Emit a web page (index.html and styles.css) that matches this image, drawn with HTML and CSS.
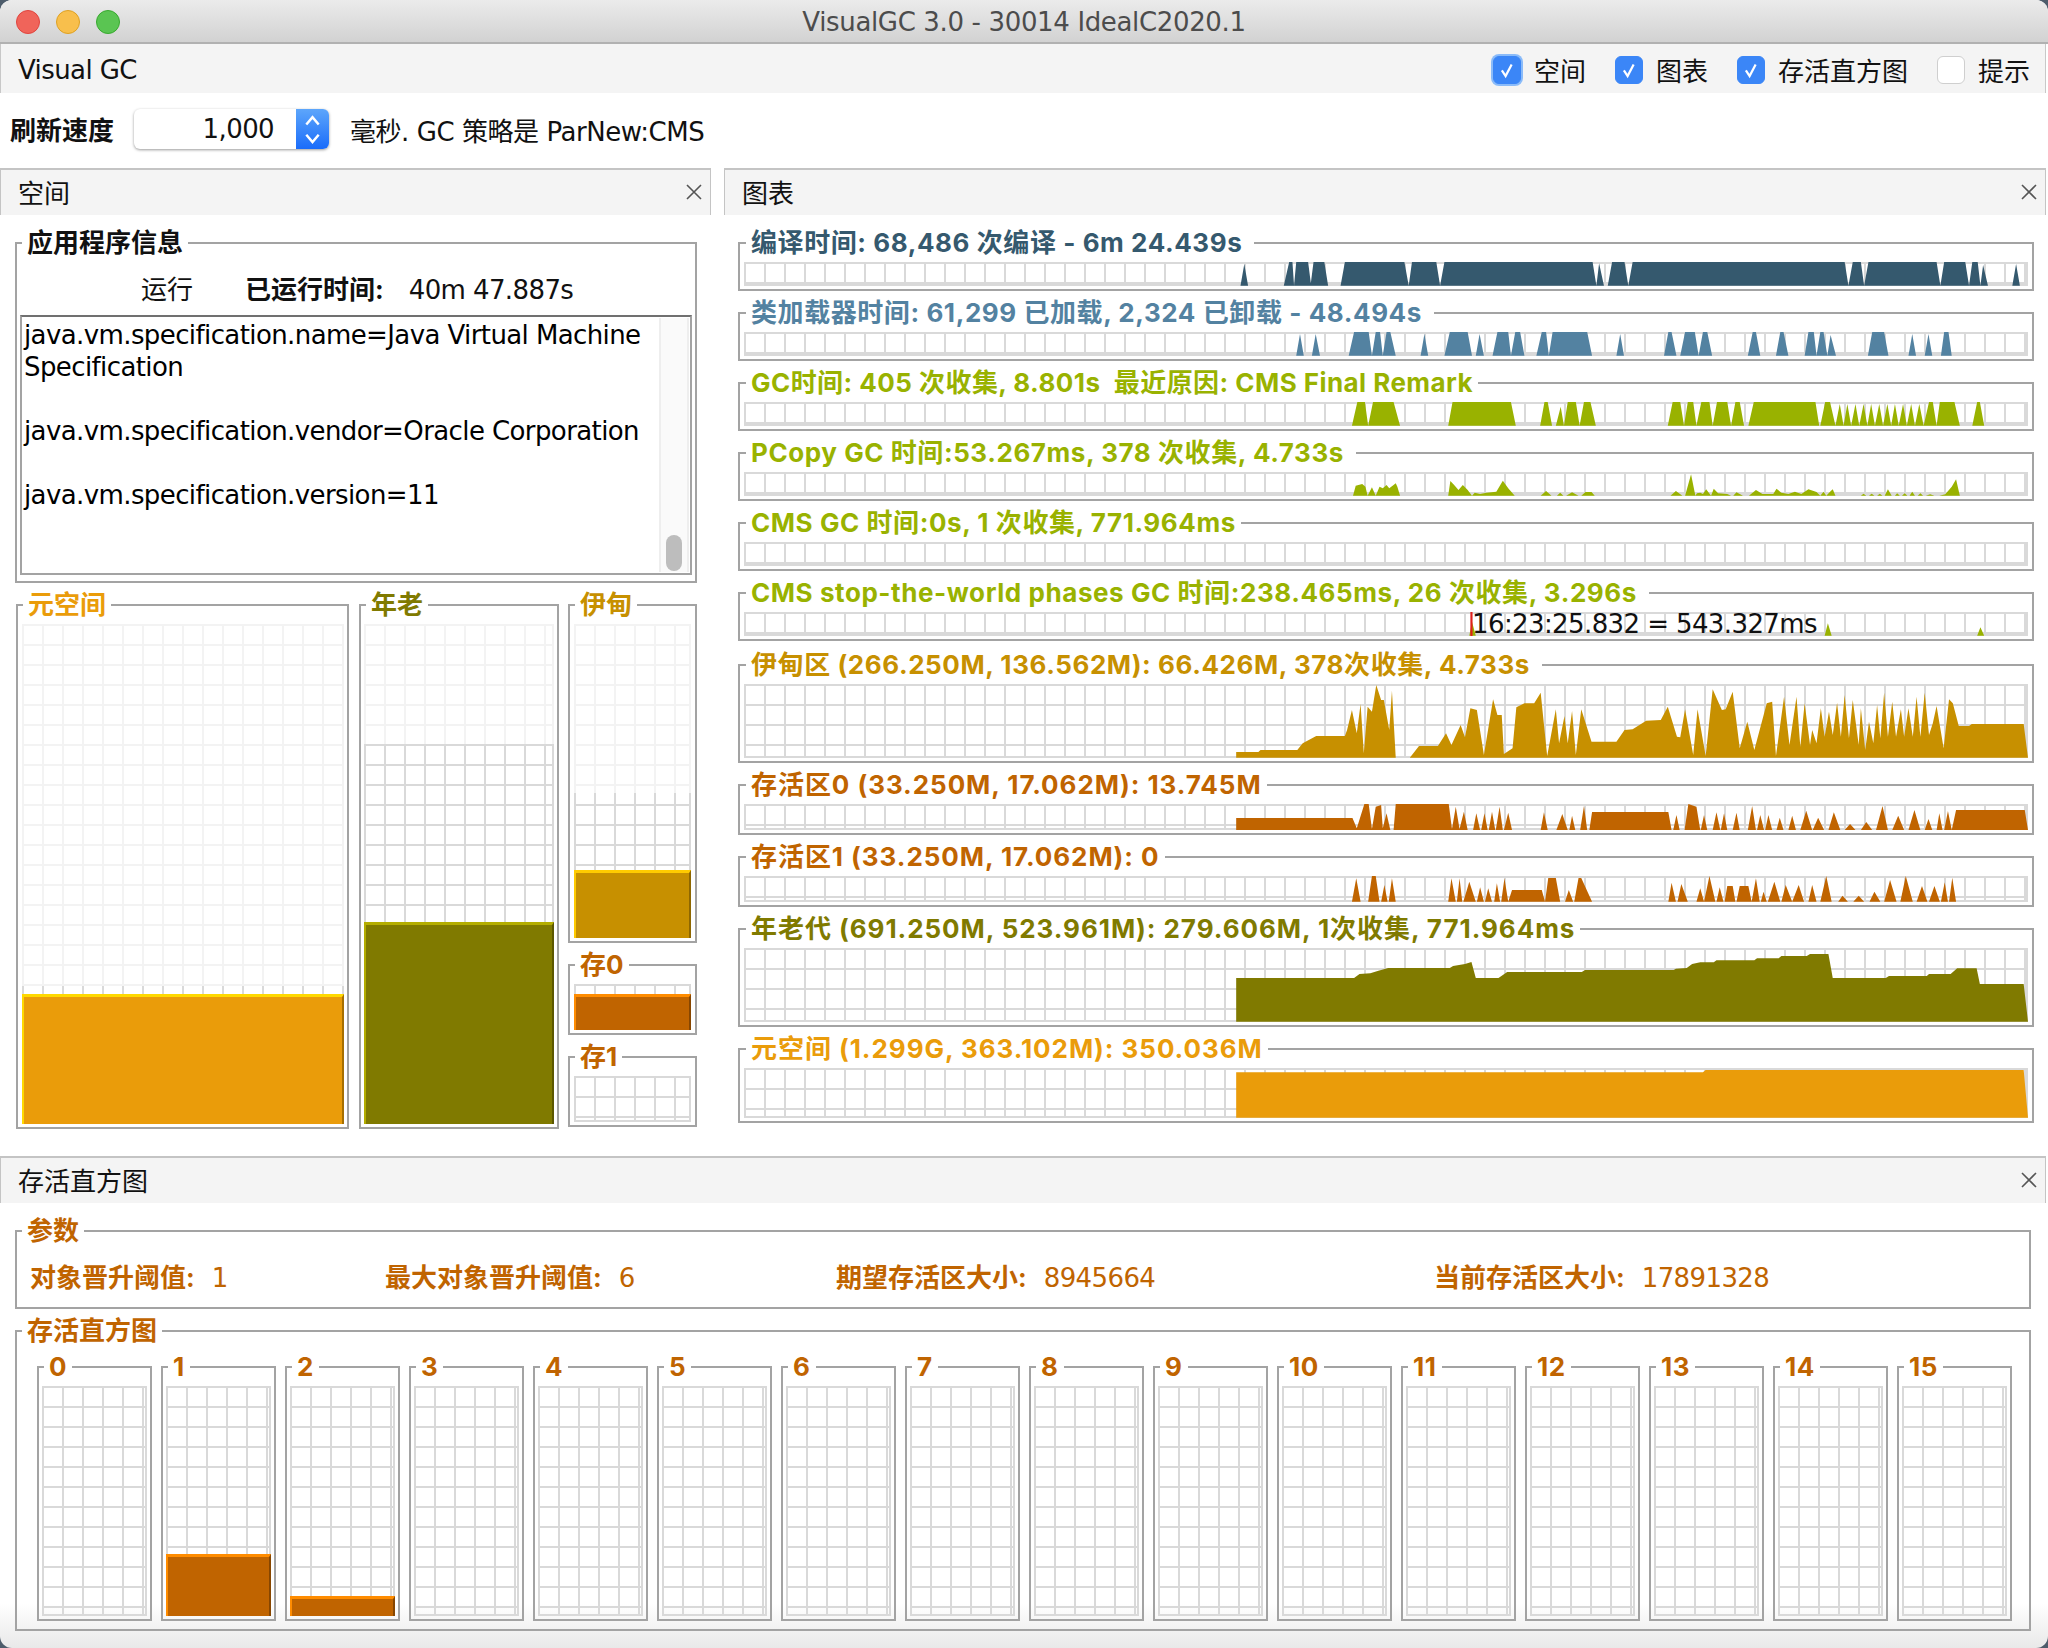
FILE: index.html
```html
<!DOCTYPE html>
<html lang="zh-CN">
<head>
    <meta charset="UTF-8">
    <title>VisualGC 3.0 - 30014 IdealC2020.1</title>
    <link rel="stylesheet" href="styles.css">
</head>
<body>
<div class="window">
    <div class="titlebar">
        <div class="lights"><span class="light red"></span><span class="light yellow"></span><span class="light green"></span></div>
        <div class="title">VisualGC 3.0 - 30014 IdealC2020.1</div>
    </div>

    <div class="toolbar">
        <span class="latin">Visual GC</span>
        <div class="toggles">
            <label class="toggle"><span class="check on focus"><svg viewBox="0 0 28 28"><path d="M8.5 14.5 12.5 20.5 19 8"/></svg></span>空间</label>
            <label class="toggle"><span class="check on"><svg viewBox="0 0 28 28"><path d="M8.5 14.5 12.5 20.5 19 8"/></svg></span>图表</label>
            <label class="toggle"><span class="check on"><svg viewBox="0 0 28 28"><path d="M8.5 14.5 12.5 20.5 19 8"/></svg></span>存活直方图</label>
            <label class="toggle"><span class="check"></span>提示</label>
        </div>
    </div>

    <div class="refresh">
        <b>刷新速度</b>
        <div class="spinner">
            <span class="spinner-value latin">1,000</span>
            <span class="spinner-arrows"><svg viewBox="0 0 32 40"><path d="M10 15 16 8 22 15M10 25 16 32 22 25"/></svg></span>
        </div>
        <span class="strategy">毫秒. GC 策略是 ParNew:CMS</span>
    </div>

    <div class="panels">
        <section class="panel">
            <div class="panel-head">空间<svg class="close" viewBox="0 0 16 16"><path d="M1 1 15 15M15 1 1 15"/></svg></div>
            <div class="space-body">
                <fieldset class="box app-info">
                    <legend>应用程序信息</legend>
                    <div class="run-row"><span class="run-state">运行</span><b>已运行时间:</b><span class="run-time latin">40m 47.887s</span></div>
                    <div class="props">
                        <div class="props-text latin">java.vm.specification.name=Java Virtual Machine
Specification

java.vm.specification.vendor=Oracle Corporation

java.vm.specification.version=11</div>
                        <div class="scrollbar"><span class="thumb"></span></div>
                    </div>
                </fieldset>

                <div class="gauges">
                    <fieldset class="box c-meta">
                        <legend>元空间</legend>
                        <div class="plot gauge" style="height:500px"><div class="reserved" style="height:362px"></div><div class="used" style="height:130px"></div></div>
                    </fieldset>
                    <fieldset class="box c-old">
                        <legend>年老</legend>
                        <div class="plot gauge" style="height:500px"><div class="reserved" style="height:120px"></div><div class="used" style="height:202px"></div></div>
                    </fieldset>
                    <div class="gauge-stack">
                        <fieldset class="box c-eden">
                            <legend>伊甸</legend>
                            <div class="plot gauge" style="height:314px"><div class="reserved" style="height:169px"></div><div class="used" style="height:68px"></div></div>
                        </fieldset>
                        <fieldset class="box c-surv">
                            <legend>存0</legend>
                            <div class="plot gauge" style="height:46px"><div class="used" style="height:36px"></div></div>
                        </fieldset>
                        <fieldset class="box c-surv">
                            <legend>存1</legend>
                            <div class="plot gauge" style="height:46px"></div>
                        </fieldset>
                    </div>
                </div>
            </div>
        </section>

        <section class="panel">
            <div class="panel-head">图表<svg class="close" viewBox="0 0 16 16"><path d="M1 1 15 15M15 1 1 15"/></svg></div>
            <div class="charts">
                <fieldset class="box chart c-compile">
                    <legend class="long">编译时间: 68,486 次编译 - 6m 24.439s</legend>
                    <div class="plot h24"><svg viewBox="-843 126 2374 72" preserveAspectRatio="none"><path d="M75 197 82 132 89 197ZM155 197 165 126 171 126 174 197 178 126 200 126 205 190 210 126 230 126 237 197ZM260 197 268 126 378 126 386 197 392 126 437 126 444 197 452 126 726 126 733 197 738 130 747 197ZM754 197 762 126 785 126 792 197 800 126 1192 126 1199 197 1207 126 1222 126 1228 197 1236 126 1362 126 1369 197 1376 126 1415 126 1422 197 1428 126 1438 126 1443 197 1448 135 1457 197ZM1502 197 1509 132 1516 197Z"/></svg></div>
                </fieldset>
                <fieldset class="box chart c-loader">
                    <legend class="long">类加载器时间: 61,299 已加载, 2,324 已卸载 - 48.494s</legend>
                    <div class="plot h24"><svg viewBox="-843 336 2374 72" preserveAspectRatio="none"><path d="M178 407 185 342 192 407ZM207 407 214 342 222 407ZM275 407 285 336 312 336 318 407 325 336 333 336 338 407 345 336 352 336 362 407ZM408 407 415 342 422 407ZM452 407 462 336 495 336 503 407ZM510 407 517 342 525 407ZM541 407 550 336 570 336 575 407 583 336 592 336 600 407ZM622 407 632 336 640 336 645 407 652 336 716 336 725 407ZM770 407 777 342 784 407ZM858 407 866 336 872 336 881 407ZM888 407 897 336 915 336 922 407 930 336 938 336 947 407ZM1013 407 1022 336 1028 336 1036 407ZM1065 407 1073 336 1079 336 1088 407ZM1118 407 1125 336 1135 336 1140 407 1147 336 1153 336 1160 407 1166 345 1176 407ZM1235 407 1243 336 1265 336 1273 407ZM1310 407 1317 342 1324 407ZM1340 407 1347 342 1354 407ZM1370 407 1376 336 1384 336 1390 407Z"/></svg></div>
                </fieldset>
                <fieldset class="box chart c-gc">
                    <legend class="tight">GC时间: 405 次收集, 8.801s &nbsp;最近原因: CMS Final Remark</legend>
                    <div class="plot h24"><svg viewBox="-843 546 2374 72" preserveAspectRatio="none"><path d="M281 617 291 546 305 546 311 617 320 546 358 546 370 617ZM459 617 467 546 575 546 584 617ZM629 617 637 546 643 546 651 617ZM658 617 667 560 673 617 680 546 695 546 702 617 710 546 722 546 732 617ZM865 617 874 546 888 546 895 617 902 546 912 546 918 617 927 546 942 546 948 617 956 546 975 546 982 617 990 546 998 546 1006 617ZM1014 617 1024 546 1138 546 1145 617 1147 617 1156 546 1165 546 1175 617 1183 552 1190 617 1197 552 1204 617 1212 552 1219 617 1227 552 1234 617 1241 552 1248 617 1256 552 1263 617 1271 552 1278 617 1285 552 1292 617 1300 552 1307 617 1315 552 1322 617 1330 552 1338 617 1348 546 1355 546 1362 617 1368 546 1395 546 1405 617ZM1428 617 1437 546 1442 546 1450 617Z"/></svg></div>
                </fieldset>
                <fieldset class="box chart c-gc">
                    <legend class="long">PCopy GC 时间:53.267ms, 378 次收集, 4.733s</legend>
                    <div class="plot h24"><svg viewBox="-843 756 2374 72" preserveAspectRatio="none"><path d="M283 827 288 797 300 792 306 800 310 827 318 802 325 827 332 800 338 805 345 795 350 805 358 795 362 790 365 800 370 827ZM459 827 463 783 470 795 478 810 486 795 495 810 503 827 508 818 518 822 530 818 548 815 560 782 570 805 582 827ZM630 827 640 813 650 827ZM660 827 666 818 672 827ZM677 827 688 817 700 827ZM705 827 713 816 724 816 730 827ZM870 827 880 813 892 827ZM897 827 908 763 916 827 919 820 925 818 930 822 936 808 945 827 950 806 958 820 975 822 982 827 986 827 992 817 1004 827ZM1015 827 1028 810 1040 822 1060 822 1066 806 1075 818 1088 822 1100 815 1112 822 1125 808 1140 816 1147 827 1153 815 1158 827 1165 815 1170 808 1175 827ZM1222 827 1227 821 1232 827ZM1237 827 1242 821 1247 827ZM1252 827 1257 821 1262 827ZM1266 827 1272 808 1279 827ZM1285 827 1289 820 1294 827ZM1298 827 1303 820 1308 827ZM1312 827 1317 815 1322 827ZM1327 827 1332 820 1337 827ZM1342 827 1350 823 1358 827ZM1367 827 1378 823 1390 800 1398 778 1405 827Z"/></svg></div>
                </fieldset>
                <fieldset class="box chart c-gc">
                    <legend>CMS GC 时间:0s, 1 次收集, 771.964ms</legend>
                    <div class="plot h24"></div>
                </fieldset>
                <fieldset class="box chart c-gc">
                    <legend class="long">CMS stop-the-world phases GC 时间:238.465ms, 26 次收集, 3.296s</legend>
                    <div class="plot h24 has-tip">
                        <svg viewBox="-843 1176 2374 72" preserveAspectRatio="none"><path d="M498 1247 503 1205 510 1247ZM1155 1247 1161 1210 1168 1247ZM1437 1247 1443 1222 1450 1247Z"/><rect class="marker" x="500" y="1176" width="4" height="72"/></svg>
                        <span class="tip latin">16:23:25.832 = 543.327ms</span>
                    </div>
                </fieldset>
                <fieldset class="box chart chart-wide-gap c-eden">
                    <legend class="long">伊甸区 (266.250M, 136.562M): 66.426M, 378次收集, 4.733s</legend>
                    <div class="plot h74"><svg viewBox="-843 102 2374 222" preserveAspectRatio="none"><path d="M67 323 67 306 108 306 112 300 180 300 190 280 215 258 268 258 272 240 281 180 290 250 297 162 303 310 310 170 318 185 326 105 335 150 340 150 350 240 355 122 362 323ZM388 323 405 288 440 288 455 250 465 285 482 225 490 262 500 175 512 180 525 315 542 148 550 195 558 195 562 312 578 295 585 172 600 160 618 160 630 128 642 318 658 178 664 280 674 198 680 280 688 183 695 315 705 178 724 275 770 275 785 240 800 238 825 212 852 210 865 170 882 260 888 262 897 178 912 315 920 178 935 318 948 118 965 180 972 178 985 125 998 295 1012 215 1025 300 1048 160 1058 155 1065 318 1080 140 1090 285 1103 140 1110 290 1118 160 1128 285 1132 240 1140 280 1148 175 1155 260 1163 185 1170 255 1178 158 1185 260 1192 135 1200 265 1207 150 1218 285 1222 175 1230 300 1237 215 1245 280 1252 165 1258 265 1265 128 1272 260 1280 155 1287 260 1296 178 1302 260 1310 175 1318 260 1325 140 1332 260 1340 128 1348 255 1355 220 1362 168 1375 295 1385 148 1392 160 1403 228 1422 228 1427 222 1523 222 1531 323Z"/></svg></div>
                </fieldset>
                <fieldset class="box chart c-surv">
                    <legend class="mem">存活区0 (33.250M, 17.062M): 13.745M</legend>
                    <div class="plot h26"><svg viewBox="-843 462 2374 78" preserveAspectRatio="none"><path d="M67 540 67 504 282 504 290 535 304 462 312 462 318 537 325 470 335 465 338 535 345 490 352 540 358 540 362 462 460 462 466 537 473 470 480 537 488 485 495 540ZM505 540 511 490 518 540ZM520 540 526 490 532 540ZM534 540 540 485 546 540ZM547 540 554 470 560 540ZM562 540 570 488 577 540ZM630 540 636 487 643 540ZM659 540 670 492 680 540ZM683 540 688 497 694 540ZM703 540 710 468 716 540ZM720 540 725 486 866 486 872 540ZM875 540 881 495 887 540ZM896 540 903 462 918 470 925 540ZM926 540 932 495 938 540ZM948 540 955 487 962 540ZM963 540 969 490 975 540ZM985 540 992 488 998 540ZM1013 540 1021 468 1028 540ZM1030 540 1036 495 1043 540ZM1045 540 1051 495 1058 540ZM1066 540 1072 503 1079 540ZM1088 540 1095 497 1102 540ZM1110 540 1121 482 1132 540ZM1133 540 1143 503 1154 540ZM1162 540 1172 487 1184 540ZM1192 540 1202 522 1212 540ZM1222 540 1232 516 1243 540ZM1250 540 1262 468 1272 540ZM1280 540 1291 497 1302 540ZM1310 540 1321 480 1332 540ZM1340 540 1347 507 1354 540ZM1362 540 1367 490 1373 540ZM1376 540 1383 483 1390 540 1398 480 1525 480 1531 540Z"/></svg></div>
                </fieldset>
                <fieldset class="box chart c-surv">
                    <legend class="mem">存活区1 (33.250M, 17.062M): 0</legend>
                    <div class="plot h26"><svg viewBox="-843 678 2374 78" preserveAspectRatio="none"><path d="M281 755 289 685 297 755ZM311 755 318 678 325 678 332 755ZM335 755 341 705 347 755ZM349 755 355 685 362 755ZM459 755 465 685 473 755ZM475 755 480 685 485 755ZM487 755 498 695 510 755ZM512 755 518 712 525 755ZM527 755 533 715 540 755ZM544 755 549 700 555 755ZM557 755 563 685 570 755 577 720 632 720 638 755 644 684 658 684 666 755ZM675 755 682 720 690 755ZM692 755 700 684 705 684 725 755ZM866 755 872 698 880 755ZM883 755 890 702 902 755ZM918 755 925 715 932 755 942 678 953 755ZM955 755 961 712 968 755ZM970 755 975 708 985 708 990 755ZM992 755 998 708 1014 708 1020 755 1028 685 1035 755ZM1037 755 1042 725 1048 755ZM1050 755 1062 695 1073 755ZM1075 755 1083 705 1095 755 1107 705 1117 755ZM1125 755 1132 705 1140 755ZM1147 755 1158 678 1168 755ZM1180 755 1188 737 1198 755ZM1208 755 1218 737 1228 755ZM1238 755 1247 725 1258 755ZM1265 755 1276 690 1288 755ZM1295 755 1305 678 1318 755ZM1325 755 1335 708 1345 755ZM1348 755 1358 708 1368 755ZM1370 755 1377 697 1383 755ZM1385 755 1391 683 1398 755Z"/></svg></div>
                </fieldset>
                <fieldset class="box chart c-old">
                    <legend class="mem">年老代 (691.250M, 523.961M): 279.606M, 1次收集, 771.964ms</legend>
                    <div class="plot h74"><svg viewBox="-843 894 2374 222" preserveAspectRatio="none"><path d="M67 1115 67 984 285 984 295 972 315 970 330 962 348 954 462 954 468 948 490 942 502 936 510 984 552 984 568 966 706 966 712 960 876 960 880 956 900 954 910 942 925 937 950 937 955 931 1025 931 1030 925 1070 925 1075 918 1122 918 1128 912 1162 912 1170 984 1268 984 1274 978 1344 978 1348 972 1388 972 1400 955 1436 955 1442 1002 1523 1002 1531 1115Z"/></svg></div>
                </fieldset>
                <fieldset class="box chart c-meta">
                    <legend class="mem">元空间 (1.299G, 363.102M): 350.036M</legend>
                    <div class="plot h50"><svg viewBox="-843 1254 2374 150" preserveAspectRatio="none"><path d="M67 1403 67 1267 930 1267 935 1260 1523 1260 1531 1403Z"/></svg></div>
                </fieldset>
            </div>
        </section>
    </div>

    <section class="panel">
        <div class="panel-head">存活直方图<svg class="close" viewBox="0 0 16 16"><path d="M1 1 15 15M15 1 1 15"/></svg></div>
        <div class="hist-body c-surv">
            <fieldset class="box params">
                <legend>参数</legend>
                <div class="param-row">
                    <span class="latin"><b>对象晋升阈值:</b>1</span>
                    <span class="latin"><b>最大对象晋升阈值:</b>6</span>
                    <span class="latin"><b>期望存活区大小:</b>8945664</span>
                    <span class="latin"><b>当前存活区大小:</b>17891328</span>
                </div>
            </fieldset>
            <fieldset class="box hist">
                <legend>存活直方图</legend>
                <div class="hist-row">
                    <fieldset class="box"><legend>0</legend><div class="plot gauge h230"></div></fieldset>
                    <fieldset class="box"><legend>1</legend><div class="plot gauge h230"><div class="used" style="height:62px"></div></div></fieldset>
                    <fieldset class="box"><legend>2</legend><div class="plot gauge h230"><div class="used" style="height:20px"></div></div></fieldset>
                    <fieldset class="box"><legend>3</legend><div class="plot gauge h230"></div></fieldset>
                    <fieldset class="box"><legend>4</legend><div class="plot gauge h230"></div></fieldset>
                    <fieldset class="box"><legend>5</legend><div class="plot gauge h230"></div></fieldset>
                    <fieldset class="box"><legend>6</legend><div class="plot gauge h230"></div></fieldset>
                    <fieldset class="box"><legend>7</legend><div class="plot gauge h230"></div></fieldset>
                    <fieldset class="box"><legend>8</legend><div class="plot gauge h230"></div></fieldset>
                    <fieldset class="box"><legend>9</legend><div class="plot gauge h230"></div></fieldset>
                    <fieldset class="box"><legend>10</legend><div class="plot gauge h230"></div></fieldset>
                    <fieldset class="box"><legend>11</legend><div class="plot gauge h230"></div></fieldset>
                    <fieldset class="box"><legend>12</legend><div class="plot gauge h230"></div></fieldset>
                    <fieldset class="box"><legend>13</legend><div class="plot gauge h230"></div></fieldset>
                    <fieldset class="box"><legend>14</legend><div class="plot gauge h230"></div></fieldset>
                    <fieldset class="box"><legend>15</legend><div class="plot gauge h230"></div></fieldset>
                </div>
            </fieldset>
        </div>
    </section>
</div>
</body>
</html>
```

FILE: styles.css
```css
* {
    box-sizing: border-box;
}
body {
    margin: 0;
    background-color: #4d5c6b;
    font-family: "DejaVu Sans", "Noto Sans CJK SC", sans-serif;
    font-size: 26px;
    color: #111111;
}
b, legend {
    font-family: "Inter", "Noto Sans CJK SC", sans-serif;
    font-weight: 700;
    letter-spacing: 0;
}
.latin {
    letter-spacing: -0.6px;
}
.window {
    width: 2048px;
    height: 1648px;
    padding-right: 2px;
    overflow: hidden;
    border-radius: 12px;
    background: linear-gradient(#ffffff calc(100% - 44px), #e9e9e9);
}

/* title bar */
.titlebar {
    display: grid;
    grid-template-columns: 1fr auto 1fr;
    align-items: center;
    width: 2048px;
    height: 44px;
    padding-top: 2px;
    background: linear-gradient(#ebebeb, #d2d2d2);
    border-bottom: 2px solid #b1b1b1;
}
.lights {
    display: flex;
    gap: 16px;
    padding-left: 16px;
}
.light {
    width: 24px;
    height: 24px;
    border-radius: 50%;
}
.red {
    background-color: #f0645a;
    border: 1px solid #e0443e;
}
.yellow {
    background-color: #f8bf4c;
    border: 1px solid #dea123;
}
.green {
    background-color: #5ac552;
    border: 1px solid #38a92f;
}
.title {
    color: #4c4c4c;
    letter-spacing: -0.35px;
}

/* top rows */
.toolbar {
    display: flex;
    justify-content: space-between;
    align-items: center;
    height: 49px;
    padding: 2px 15px 0 17px;
    background-color: #f4f4f4;
    border-left: 1px solid #c8c8c8;
    border-right: 1px solid #c8c8c8;
}
.toggles {
    display: flex;
    gap: 29px;
}
.toggle {
    display: flex;
    align-items: center;
    gap: 13px;
}
.check {
    width: 28px;
    height: 28px;
    border-radius: 6px;
    background-color: #ffffff;
    border: 1px solid #cfcfcf;
}
.check.on {
    background-color: #3b86f7;
    border-color: #3b86f7;
}
.check.focus {
    box-shadow: 0 0 0 2px #8abbf9;
}
.check svg {
    display: block;
    width: 26px;
    height: 26px;
    fill: none;
    stroke: #ffffff;
    stroke-width: 2.4;
}
.refresh {
    display: flex;
    align-items: center;
    height: 75px;
    padding: 0 0 3px 10px;
}
.refresh b {
    margin-bottom: 2px;
}
.strategy {
    letter-spacing: -0.45px;
}
.spinner {
    display: flex;
    justify-content: flex-end;
    width: 195px;
    height: 40px;
    margin: 0 21px 0 20px;
    border-radius: 6px;
    background-color: #ffffff;
    box-shadow: 0 1px 3px rgba(0, 0, 0, 0.4);
    line-height: 40px;
}
.spinner-value {
    padding-right: 22px;
}
.spinner-arrows {
    width: 33px;
    border-radius: 0 6px 6px 0;
    background: linear-gradient(#5da6fb, #1a6cfa);
}
.spinner-arrows svg {
    display: block;
    fill: none;
    stroke: #ffffff;
    stroke-width: 2.4;
}

/* panels */
.panels {
    display: grid;
    grid-template-columns: 711px 1fr;
    gap: 13px;
    height: 988px;
}
.panel-head {
    display: flex;
    justify-content: space-between;
    align-items: center;
    height: 47px;
    padding: 0 8px 2px 17px;
    background-color: #f4f4f4;
    border-top: 2px solid #c4c4c4;
    border-left: 1px solid #c4c4c4;
    border-right: 1px solid #c4c4c4;
}
.close {
    width: 16px;
    height: 16px;
    fill: none;
    stroke: #555555;
    stroke-width: 1.6;
}
.box {
    min-width: 0;
    margin: 0;
    padding: 5px 3px 3px;
    border: 2px solid #a3a3a3;
}
legend {
    height: 28px;
    margin-left: 2px;
    padding: 0 5px;
    line-height: 28px;
}

/* grid drawn behind every graph */
.plot {
    background-image:
        linear-gradient(#d9d9d9 2px, transparent 2px),
        linear-gradient(90deg, #d9d9d9 2px, transparent 2px),
        linear-gradient(#d9d9d9, #d9d9d9),
        linear-gradient(#d9d9d9, #d9d9d9);
    background-size: 20px 20px, 20px 20px, 100% 2px, 2px 100%;
    background-position: 0 0, 0 0, 0 100%, 100% 0;
    background-repeat: repeat, repeat, no-repeat, no-repeat;
}
.plot svg {
    display: block;
    width: 100%;
    height: 100%;
    fill: currentColor;
}

/* left panel */
.space-body {
    padding: 14px 14px 0 15px;
}
.app-info {
    padding: 12px 3px 6px;
}
.run-row {
    display: flex;
    align-items: baseline;
    height: 34px;
    margin-bottom: 12px;
    padding-left: 121px;
}
.run-state {
    margin-right: 52px;
}
.run-time {
    margin-left: 25px;
}
.props {
    display: flex;
    justify-content: space-between;
    height: 260px;
    padding-left: 2px;
    border: 2px solid #a3a3a3;
    border-top-color: #707070;
}
.props-text {
    padding-top: 2px;
    line-height: 32px;
    white-space: pre;
    color: #000000;
}
.scrollbar {
    display: flex;
    align-items: flex-end;
    justify-content: center;
    width: 30px;
    margin: 1px 1px 1px 0;
    padding-bottom: 1px;
    background-color: #fafafa;
    border-left: 2px solid #eeeeee;
    border-right: 2px solid #eeeeee;
}
.thumb {
    width: 16px;
    height: 36px;
    border-radius: 8px;
    background-color: #bdbdbd;
}
.gauges {
    display: grid;
    grid-template-columns: 333px 200px 128px;
    column-gap: 10px;
    margin: 8px 0 0 1px;
}
.gauges > .c-meta {
    padding-left: 4px;
}
.gauges > .c-meta legend {
    margin-left: 1px;
}
.gauge-stack {
    display: flex;
    flex-direction: column;
    gap: 8px;
    margin-left: -1px;
}
.gauge-stack .box {
    padding: 5px 4px 3px;
}
.gauge-stack legend {
    margin-left: 1px;
}
.gauge {
    display: flex;
    flex-direction: column;
    justify-content: space-between;
}
.reserved {
    background-color: rgba(255, 255, 255, 0.68);
}
.used {
    margin-top: auto;
    background-color: var(--fill);
    border-top: 3px solid var(--light);
    border-left: 2px solid var(--light);
    border-right: 2px solid var(--dark);
}

/* right panel */
.charts {
    display: flex;
    flex-direction: column;
    gap: 8px;
    padding: 14px 12px 0 14px;
}
.chart {
    padding: 5px 4px 3px;
}
.chart legend {
    letter-spacing: 0.57px;
}
.chart legend.long {
    padding-right: 12px;
}
.chart legend.tight {
    letter-spacing: 0.45px;
}
.chart legend.mem {
    letter-spacing: 0.95px;
}
.chart-wide-gap {
    margin-top: 2px;
}
.h24 {
    height: 24px;
}
.h26 {
    height: 26px;
}
.h50 {
    height: 50px;
}
.h74 {
    height: 74px;
}
.h230 {
    height: 230px;
}
.has-tip {
    position: relative;
}
.marker {
    fill: #e0201c;
}
.tip {
    position: absolute;
    left: 728px;
    top: 0;
    line-height: 24px;
    color: #111111;
}

/* series colours */
.c-compile {
    color: #35596e;
}
.c-loader {
    color: #5382a1;
}
.c-gc {
    color: #99b200;
}
.c-meta {
    color: #ea9c0a;
    --fill: #ea9c0a;
    --light: #ffd900;
    --dark: #a66f00;
}
.c-old {
    color: #807a00;
    --fill: #807a00;
    --light: #b4ad00;
    --dark: #5c5700;
}
.c-eden {
    color: #c79000;
    --fill: #c79000;
    --light: #ffcb00;
    --dark: #8e6700;
}
.c-surv {
    color: #c06400;
    --fill: #c06400;
    --light: #ff8c00;
    --dark: #874600;
}

/* bottom panel */
.hist-body {
    padding: 14px 15px 0;
}
.params {
    padding: 0 3px;
}
.param-row {
    display: grid;
    grid-template-columns: 355px 451px 598px 1fr;
    align-items: center;
    height: 62px;
    padding: 0 0 2px 10px;
}
.param-row b {
    margin-right: 17px;
}
.hist {
    margin-top: 8px;
    padding: 8px 3px;
}
.hist-row {
    display: flex;
    gap: 9px;
    padding-left: 17px;
}
.hist-row .box {
    width: 115px;
}
.hist-row legend {
    letter-spacing: 0.6px;
}
```
